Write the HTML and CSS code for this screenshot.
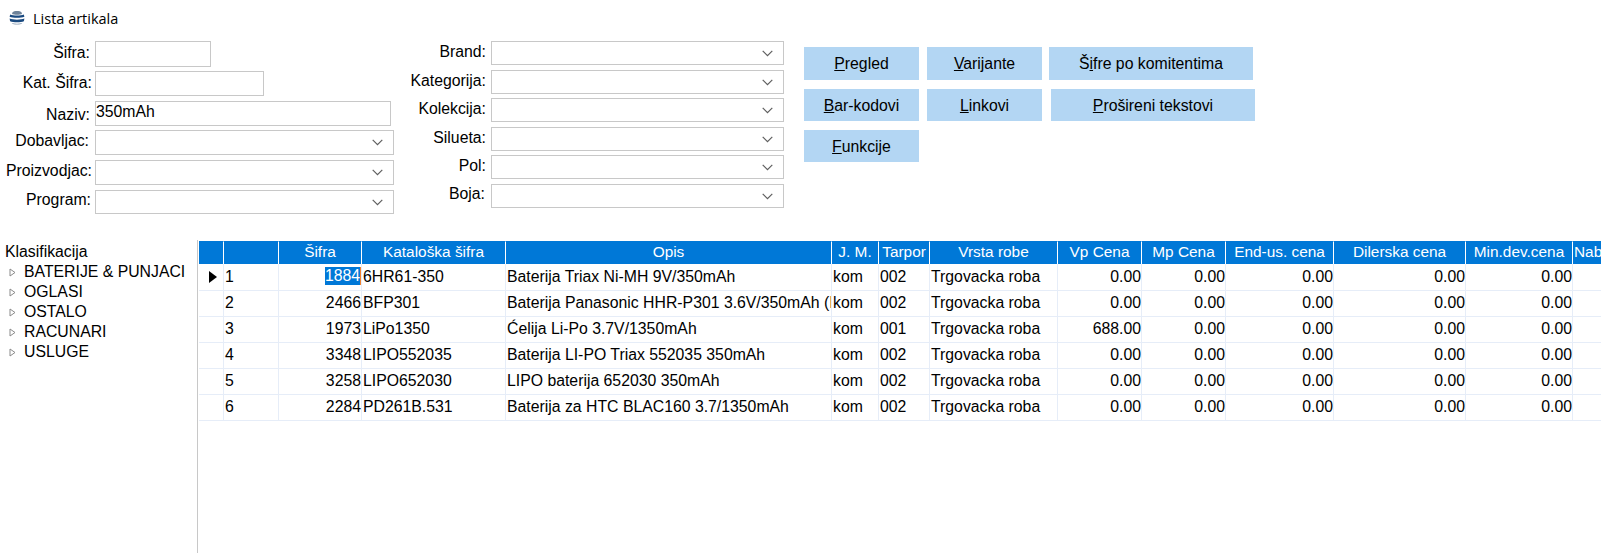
FILE: index.html
```html
<!DOCTYPE html>
<html lang="sr">
<head>
<meta charset="utf-8">
<title>Lista artikala</title>
<link rel="stylesheet" href="styles.css">
</head>
<body>
<svg class="defs" width="0" height="0" aria-hidden="true">
  <symbol id="chev" viewBox="0 0 11 7"><path d="M.7.8 5.5 5.6 10.3.8" fill="none" stroke="#5f5f5f" stroke-width="1.2"/></symbol>
  <symbol id="tri" viewBox="0 0 7 9"><path d="M1 1v7l5-3.500z" fill="#fff" stroke="#8a8a8a" stroke-width="1"/></symbol>
</svg>
<header class="titlebar">
  <svg class="app-icon" viewBox="0 0 16 16" aria-hidden="true">
    <path d="M3.500 2.500C5 .6 11 .6 12.500 2.500L13 4c-2 1-8 1-10 0z" fill="#6d8299"/>
    <path d="M1.200 4.400c3 1.500 10.600 1.500 13.600 0l.6 2.300c-3.500 1.500-11.300 1.500-14.800 0z" fill="#1a4a80"/>
    <path d="M.6 8.500c3.500 1.500 11.300 1.500 14.800 0l-.5 2.800c-3.200 1.400-10.600 1.400-13.800 0z" fill="#1a4a80"/>
    <path d="M2.700 12.900c3 1 7.600 1 10.600 0-1.200 2.200-9.400 2.200-10.600 0z" fill="#8a9db2"/>
  </svg>
  <span>Lista artikala</span>
</header>
<section class="filters">
  <div class="form form-left">
    <label class="lbl">Šifra:</label><div class="box w-s h-26"></div>
    <label class="lbl lbl-r">Kat. Šifra:</label><div class="box w-m"></div>
    <label class="lbl lbl-d">Naziv:</label><input class="box w-l value" type="text" value="350mAh">
    <label class="lbl lbl-u lbl-l">Dobavljac:</label><div class="box combo w-full"><svg class="chev"><use href="#chev"/></svg></div>
    <label class="lbl lbl-u lbl-r">Proizvodjac:</label><div class="box combo w-full"><svg class="chev"><use href="#chev"/></svg></div>
    <label class="lbl lbl-u2">Program:</label><div class="box combo w-full h-24"><svg class="chev"><use href="#chev"/></svg></div>
  </div>
  <div class="form form-mid">
    <label class="lbl">Brand:</label><div class="box combo"><svg class="chev"><use href="#chev"/></svg></div>
    <label class="lbl">Kategorija:</label><div class="box combo"><svg class="chev"><use href="#chev"/></svg></div>
    <label class="lbl">Kolekcija:</label><div class="box combo"><svg class="chev"><use href="#chev"/></svg></div>
    <label class="lbl">Silueta:</label><div class="box combo"><svg class="chev"><use href="#chev"/></svg></div>
    <label class="lbl">Pol:</label><div class="box combo"><svg class="chev"><use href="#chev"/></svg></div>
    <label class="lbl lbl-b">Boja:</label><div class="box combo"><svg class="chev"><use href="#chev"/></svg></div>
  </div>
  <div class="actions">
    <div class="btn-row row-1">
      <button class="btn" type="button"><u>P</u>regled</button>
      <button class="btn" type="button"><u>V</u>arijante</button>
      <button class="btn btn-wide" type="button">Š<u>i</u>fre po komitentima</button>
    </div>
    <div class="btn-row row-2">
      <button class="btn" type="button"><u>B</u>ar-kodovi</button>
      <button class="btn" type="button"><u>L</u>inkovi</button>
      <button class="btn btn-wide shift" type="button"><u>P</u>rošireni tekstovi</button>
    </div>
    <div class="btn-row row-2">
      <button class="btn" type="button"><u>F</u>unkcije</button>
    </div>
  </div>
</section>
<main class="content">
  <aside class="tree">
    <div class="tree-title">Klasifikacija</div>
    <ul class="tree-list">
      <li><svg class="tri"><use href="#tri"/></svg>BATERIJE &amp; PUNJACI</li>
      <li><svg class="tri"><use href="#tri"/></svg>OGLASI</li>
      <li><svg class="tri"><use href="#tri"/></svg>OSTALO</li>
      <li><svg class="tri"><use href="#tri"/></svg>RACUNARI</li>
      <li><svg class="tri"><use href="#tri"/></svg>USLUGE</li>
    </ul>
  </aside>
  <div class="grid-wrap">
    <table class="grid">
      <colgroup>
        <col class="c1"><col class="c2"><col class="c3"><col class="c4"><col class="c5"><col class="c6"><col class="c7">
        <col class="c8"><col class="c9"><col class="c10"><col class="c11"><col class="c12"><col class="c13"><col class="c14">
      </colgroup>
      <thead>
        <tr><th></th><th></th><th>Šifra</th><th>Kataloška šifra</th><th>Opis</th><th>J. M.</th><th>Tarpor</th><th>Vrsta robe</th><th>Vp Cena</th><th>Mp Cena</th><th>End-us. cena</th><th>Dilerska cena</th><th>Min.dev.cena</th><th class="left">Nab</th></tr>
      </thead>
      <tbody>
        <tr><td class="ind"><span class="arrow"></span></td><td>1</td><td class="num"><span class="sel">1884</span></td><td>6HR61-350</td><td>Baterija Triax Ni-MH 9V/350mAh</td><td>kom</td><td>002</td><td>Trgovacka roba</td><td class="num">0.00</td><td class="num">0.00</td><td class="num">0.00</td><td class="num">0.00</td><td class="num">0.00</td><td></td></tr>
        <tr><td class="ind"></td><td>2</td><td class="num">2466</td><td>BFP301</td><td>Baterija Panasonic HHR-P301 3.6V/350mAh (I</td><td>kom</td><td>002</td><td>Trgovacka roba</td><td class="num">0.00</td><td class="num">0.00</td><td class="num">0.00</td><td class="num">0.00</td><td class="num">0.00</td><td></td></tr>
        <tr><td class="ind"></td><td>3</td><td class="num">1973</td><td>LiPo1350</td><td>Ćelija Li-Po 3.7V/1350mAh</td><td>kom</td><td>001</td><td>Trgovacka roba</td><td class="num">688.00</td><td class="num">0.00</td><td class="num">0.00</td><td class="num">0.00</td><td class="num">0.00</td><td></td></tr>
        <tr><td class="ind"></td><td>4</td><td class="num">3348</td><td>LIPO552035</td><td>Baterija LI-PO Triax 552035 350mAh</td><td>kom</td><td>002</td><td>Trgovacka roba</td><td class="num">0.00</td><td class="num">0.00</td><td class="num">0.00</td><td class="num">0.00</td><td class="num">0.00</td><td></td></tr>
        <tr><td class="ind"></td><td>5</td><td class="num">3258</td><td>LIPO652030</td><td>LIPO baterija 652030 350mAh</td><td>kom</td><td>002</td><td>Trgovacka roba</td><td class="num">0.00</td><td class="num">0.00</td><td class="num">0.00</td><td class="num">0.00</td><td class="num">0.00</td><td></td></tr>
        <tr><td class="ind"></td><td>6</td><td class="num">2284</td><td>PD261B.531</td><td>Baterija za HTC BLAC160 3.7/1350mAh</td><td>kom</td><td>002</td><td>Trgovacka roba</td><td class="num">0.00</td><td class="num">0.00</td><td class="num">0.00</td><td class="num">0.00</td><td class="num">0.00</td><td></td></tr>
      </tbody>
    </table>
  </div>
</main>
</body>
</html>
```
FILE: styles.css
```css
* { box-sizing: border-box; }
html, body { height: 100%; }
body {
  margin: 0;
  height: 553px;
  overflow: hidden;
  background: #fff;
  color: #000;
  font: 15.8px/17px "Liberation Sans", Arial, sans-serif;
  display: flex;
  flex-direction: column;
}
.defs { position: absolute; }

.titlebar {
  height: 41px;
  padding: 10px 0 0 9px;
  display: flex;
  align-items: flex-start;
  gap: 8px;
  font: 14.5px/18px "Open Sans", "Noto Sans", sans-serif;
}
.app-icon { width: 16px; height: 16px; flex: none; }

.filters { display: flex; height: 199px; flex: none; }
.form { display: grid; align-items: start; }
.form-left {
  width: 395px;
  grid-template-columns: 95px 300px;
  grid-template-rows: 30px 30px 29px 30px 30px 25px;
}
.form-mid {
  width: 409px;
  grid-template-columns: 96px 293px;
  grid-template-rows: 29px 28px 29px 28px 29px 24px;
}
.lbl { text-align: right; padding-right: 5px; padding-top: 3px; white-space: nowrap; }
.form-mid .lbl { padding-top: 2px; }
.form-mid .lbl-b { padding-top: 1px; padding-right: 6px; }
.lbl-r { padding-right: 3px; }
.lbl-l { padding-right: 6px; }
.lbl-d { padding-top: 5px; }
.lbl-u { padding-top: 2px; }
.lbl-u2 { padding-top: 1px; padding-right: 4px; }

.box {
  display: flex;
  align-items: center;
  height: 24px;
  border: 1px solid #c8c8c8;
  background: #fff;
}
.form-left .box { height: 25px; }
.form-left .h-26 { height: 26px; }
.form-left .h-24 { height: 24px; }
.w-s { width: 116px; }
.w-m { width: 169px; }
.w-l { width: 296px; }
.w-full { width: 299px; }
.value {
  font: inherit;
  color: #000;
  padding: 0 0 3px 0;
  border-radius: 0;
  outline: none;
}
.combo { justify-content: flex-end; padding-right: 10px; }
.chev { width: 11px; height: 7px; }

.actions { padding-top: 6px; width: 470px; }
.btn-row { display: flex; gap: 8px; height: 33px; }
.row-2 { margin-top: 9px; height: 32px; }
.btn {
  width: 115px;
  height: 100%;
  padding: 0;
  border: 0;
  border-radius: 0;
  background: #b3d6f3;
  color: #000;
  font: inherit;
}
.btn-wide { width: 204px; margin-left: -1px; }
.shift { margin-left: 1px; }

.content { flex: 1; display: flex; min-height: 0; }
.tree { width: 198px; flex: none; border-right: 1px solid #c8c8c8; padding: 3px 0 0 5px; }
.tree-title { height: 20px; }
.tree-list { list-style: none; margin: 0; padding: 0; }
.tree-list li { height: 20px; display: flex; align-items: flex-start; }
.tri { width: 7px; height: 9px; margin: 5px 8px 0 4px; flex: none; }

.grid-wrap { flex: 1; min-width: 0; overflow: hidden; padding: 1px 0 0 1px; }
.grid { table-layout: fixed; width: 1494px; border-collapse: separate; border-spacing: 0; }
.c1 { width: 25px; } .c2 { width: 55px; } .c3 { width: 83px; } .c4 { width: 144px; }
.c5 { width: 326px; } .c6 { width: 47px; } .c7 { width: 51px; } .c8 { width: 128px; }
.c9 { width: 84px; } .c10 { width: 84px; } .c11 { width: 108px; } .c12 { width: 132px; }
.c13 { width: 107px; } .c14 { width: 120px; }
.grid th {
  height: 23px;
  padding: 0 0 3px;
  background: #0078d7;
  color: #fff;
  font-size: 15.4px;
  font-weight: 400;
  text-align: center;
  white-space: nowrap;
  overflow: hidden;
  border-top: 1px solid #0078d7;
  border-right: 1px solid #fff;
}
.grid th.left { text-align: left; padding-left: 1px; border-right: 0; }
.grid td {
  height: 26px;
  padding: 0 1px 2px 1px;
  white-space: nowrap;
  overflow: hidden;
  border-right: 1px solid #e6edf8;
  border-bottom: 1px solid #e6edf8;
}
.grid tbody tr:first-child td { height: 27px; }
.grid td.num { text-align: right; padding-right: 0; }
.grid td.ind { padding: 0 0 0 10px; }
.arrow {
  display: block;
  width: 0;
  height: 0;
  border-style: solid;
  border-width: 6px 0 6px 8px;
  border-color: transparent transparent transparent #000;
}
.sel {
  display: inline-block;
  width: 36px;
  height: 18px;
  background: #0078d7;
  color: #fff;
  border-right: 1px solid #f08030;
  text-align: right;
  line-height: 18px;
}
```
